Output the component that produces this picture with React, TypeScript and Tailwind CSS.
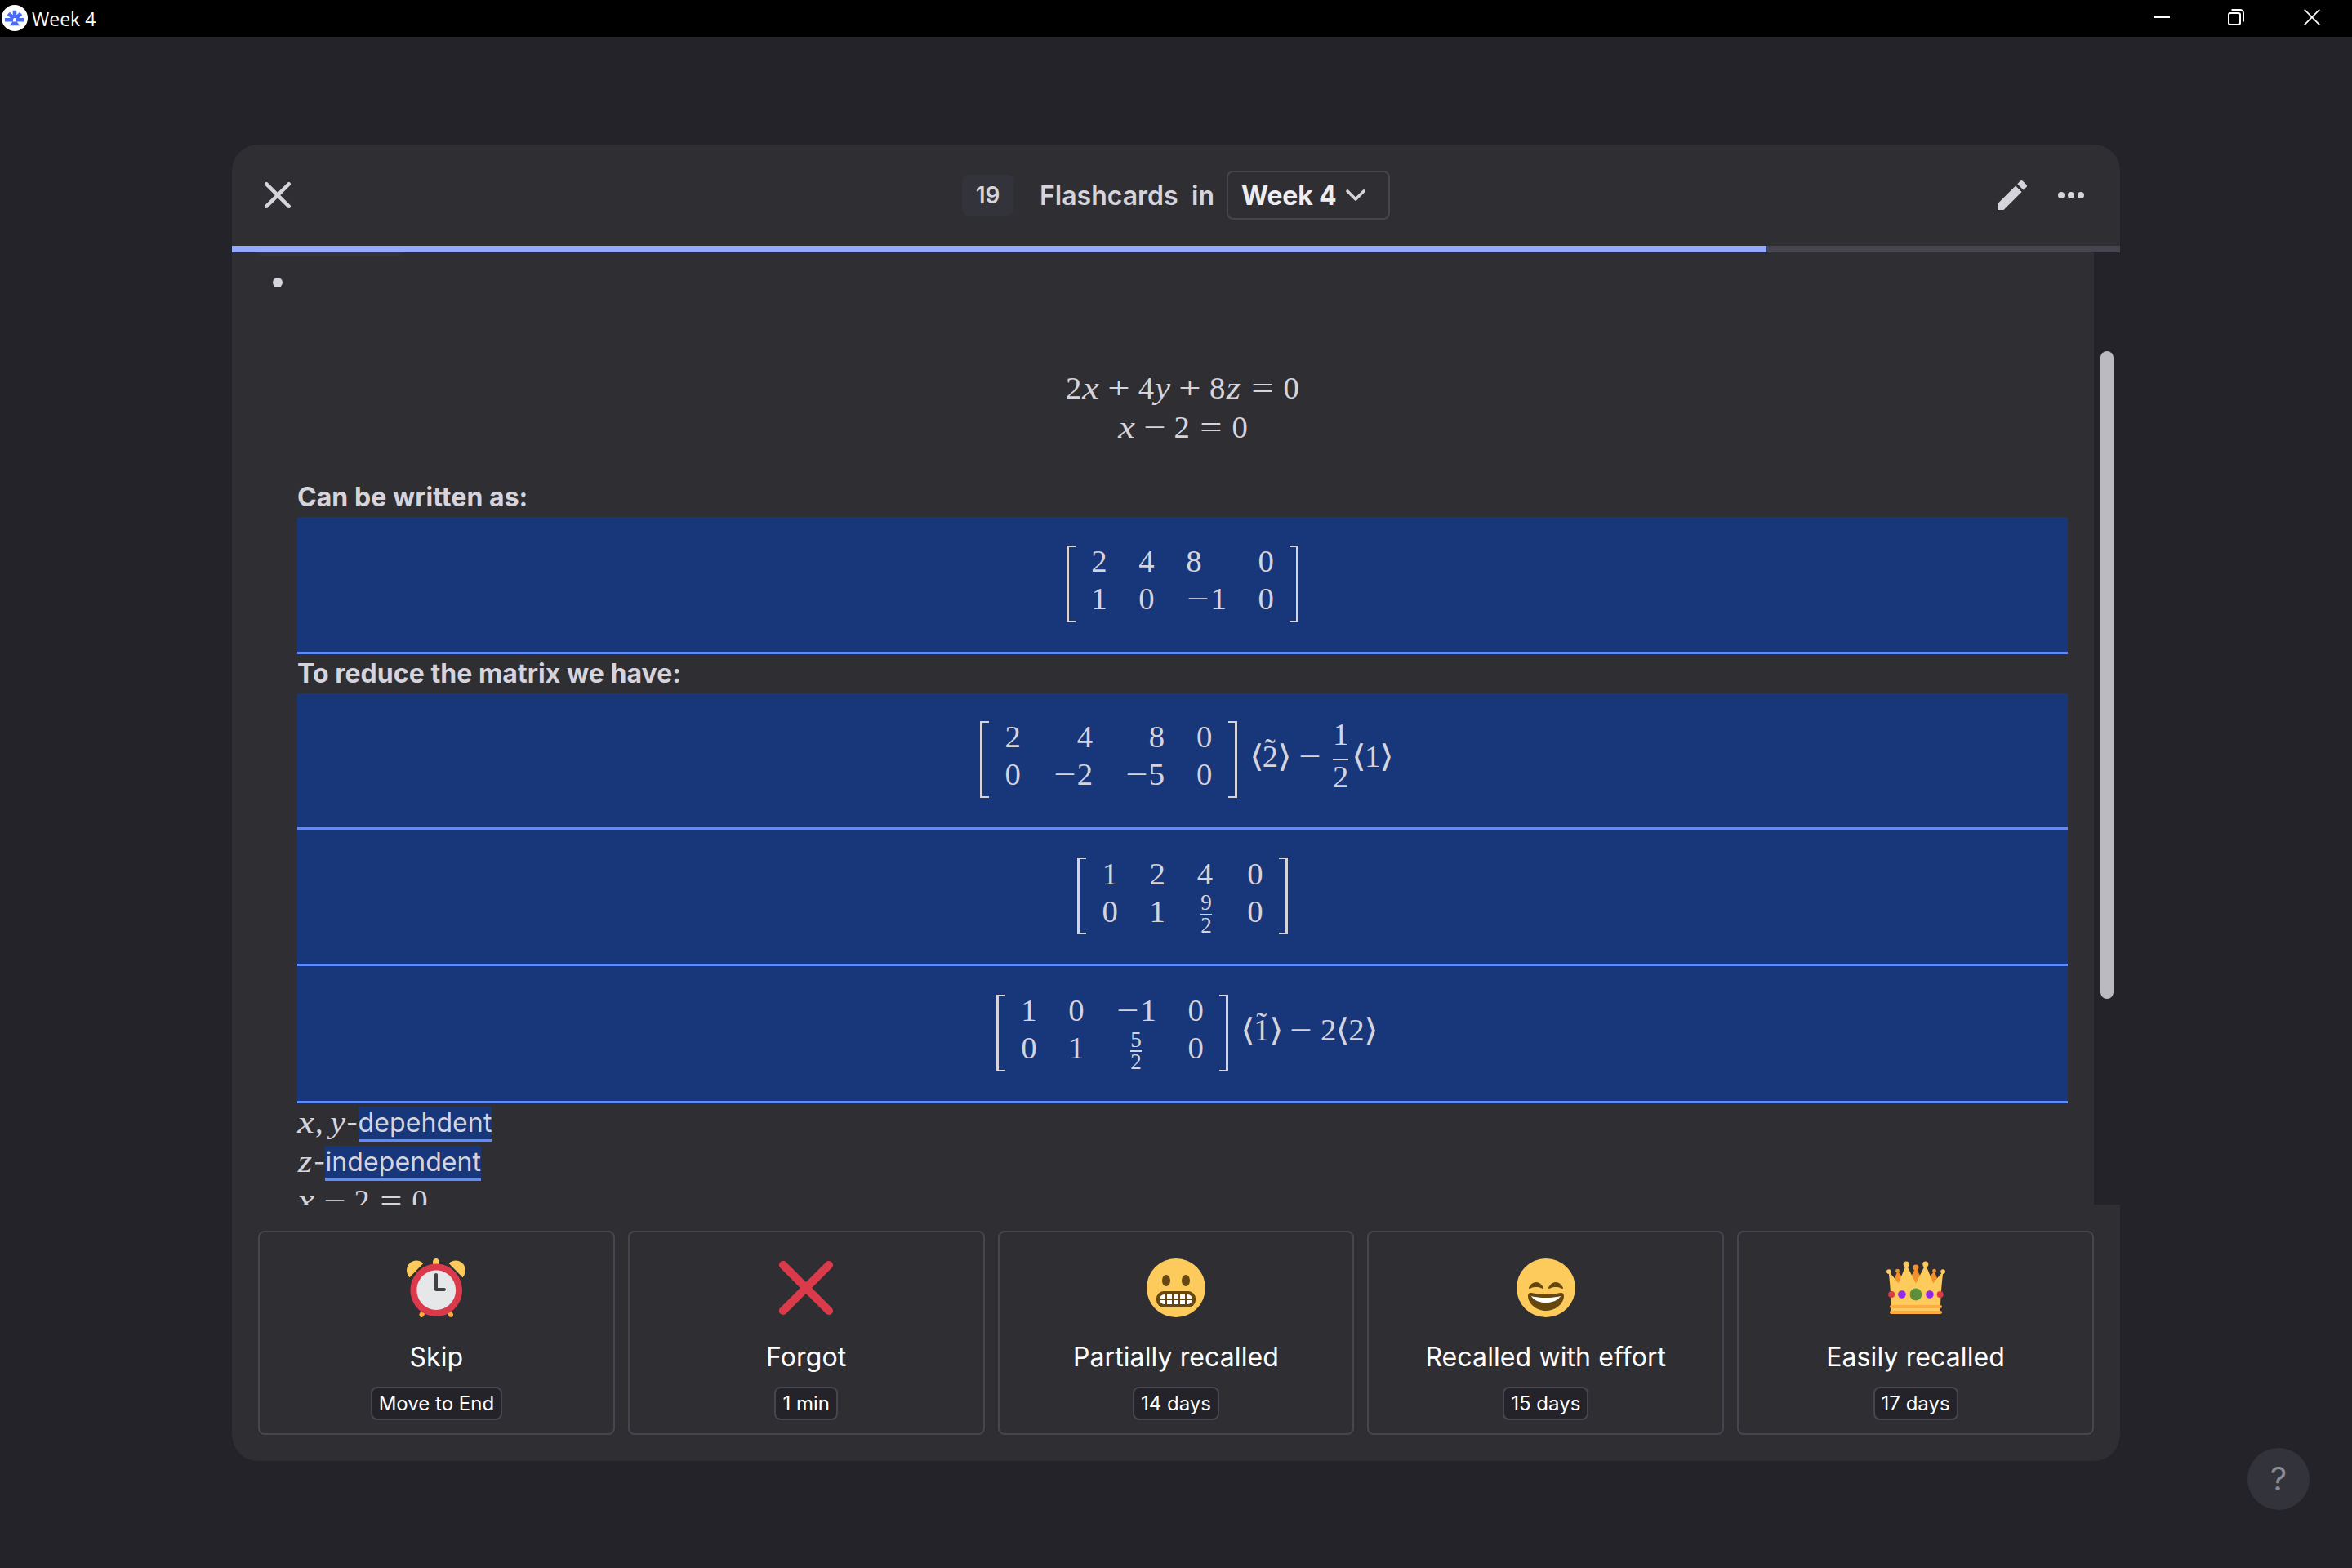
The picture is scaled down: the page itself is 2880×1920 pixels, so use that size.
import React from "react";

const INTER = "font-['Inter',sans-serif]";

/* ---------- math typesetting ---------- */

const cell = "block h-[46.46px] leading-[46.46px] whitespace-nowrap text-center shrink-0";

function D({ children }: { children: React.ReactNode }) {
  return <span className={`${cell} w-[19.36px]`}>{children}</span>;
}

function Op({ children }: { children: React.ReactNode }) {
  return (
    <span className={`${cell} w-[30.12px]`}>
      <span className="inline-block origin-center scale-x-[1.25]">{children}</span>
    </span>
  );
}

function Bin({ children }: { children: React.ReactNode }) {
  return (
    <span className="block px-[8.6px] shrink-0">
      <Op>{children}</Op>
    </span>
  );
}

function Rel() {
  return (
    <span className="block px-[10.76px] shrink-0">
      <Op>=</Op>
    </span>
  );
}

function VarX() {
  return (
    <span className={`${cell} w-[22.1px] italic`}>
      <span className="inline-block origin-center scale-x-[1.2]">x</span>
    </span>
  );
}
function VarY() {
  return (
    <span className={`${cell} w-[20.4px] italic`}>
      <span className="inline-block origin-center scale-x-[1.1]">y</span>
    </span>
  );
}
function VarZ() {
  return (
    <span className={`${cell} w-[19.7px] italic`}>
      <span className="inline-block origin-center scale-x-[1.15]">z</span>
    </span>
  );
}

function Neg({ n }: { n: string }) {
  return (
    <span className="flex">
      <Op>−</Op>
      <D>{n}</D>
    </span>
  );
}

function SmallFrac({ a, b }: { a: string; b: string }) {
  return (
    <span className="flex flex-col items-center w-[22.8px] h-[46.46px] pt-[2.5px] text-[27.1px] leading-[20px]">
      <span className="block h-5 shrink-0">{a}</span>
      <span className="block h-[1.5px] w-[13.5px] mt-[3.5px] bg-[#d5d4dc] shrink-0" />
      <span className="block h-5 mt-[2.5px] shrink-0">{b}</span>
    </span>
  );
}

function Bracket({ side }: { side: "l" | "r" }) {
  return (
    <span
      className={
        side === "l"
          ? "block shrink-0 w-[11px] h-[94px] mt-[3.5px] ml-[9.5px] border-[#d5d4dc] border-l-[3px] border-y-[2.5px]"
          : "block shrink-0 w-[11px] h-[94px] mt-[3.5px] mr-[9.5px] border-[#d5d4dc] border-r-[3px] border-y-[2.5px]"
      }
    />
  );
}

function Matrix({ cols, align }: { cols: [React.ReactNode, React.ReactNode][]; align: string }) {
  return (
    <span className="flex items-start">
      <Bracket side="l" />
      <span className="flex gap-[38.72px] px-[19.36px]">
        {cols.map((c, i) => (
          <span key={i} className={`flex flex-col ${align}`}>
            <span className="flex h-[46.46px]">{c[0]}</span>
            <span className="flex h-[46.46px]">{c[1]}</span>
          </span>
        ))}
      </span>
      <Bracket side="r" />
    </span>
  );
}

function Angle({ children, tilde }: { children: string; tilde?: boolean }) {
  return (
    <span className="flex">
      <span className={`${cell} w-[15px] font-['DejaVu_Sans'] font-extralight text-[38px]`}>
        <span className="inline-block origin-center scale-x-[1.2]">⟨</span>
      </span>
      <span className={`${cell} w-[19.36px] relative`}>
        {children}
        {tilde && <span className="absolute left-[3px] -top-[8px]">˜</span>}
      </span>
      <span className={`${cell} w-[15px] font-['DejaVu_Sans'] font-extralight text-[38px]`}>
        <span className="inline-block origin-center scale-x-[1.2]">⟩</span>
      </span>
    </span>
  );
}

function BlueBlock({ className, children }: { className: string; children: React.ReactNode }) {
  return (
    <div
      className={`flex justify-center items-start overflow-hidden bg-[#18367a] border-b-[3px] border-[#5f8bfa] font-['Liberation_Serif',serif] text-[38.72px] ${className}`}
    >
      {children}
    </div>
  );
}

const d = (s: string) => <D>{s}</D>;

/* ---------- emoji ---------- */

const RED = "#db3a4a";
const YEL = "#fdcb5b";

function Emoji({ children }: { children: React.ReactNode }) {
  return (
    <svg viewBox="0 0 36 36" className="size-[72px] shrink-0">
      {children}
    </svg>
  );
}

function Clock() {
  return (
    <Emoji>
      <path fill={YEL} d="M20 6.042c0 1.112-.903 2.014-2 2.014s-2-.902-2-2.014V2.014C16 .901 16.903 0 18 0s2 .901 2 2.014v4.028z" />
      <path fill="#fdac43" d="M9.18 36c-.224 0-.452-.052-.666-.159-.736-.374-1.035-1.28-.667-2.027l8.94-18.127c.252-.512.768-.835 1.333-.835s1.081.323 1.333.835l8.941 18.127c.368.747.07 1.653-.666 2.027-.736.372-1.631.07-1.999-.676L18.121 19.74l-7.607 15.425c-.262.529-.788.835-1.334.835z" />
      <path fill={RED} d="M34.015 19.385c0 8.898-7.115 16.111-15.894 16.111-8.777 0-15.893-7.213-15.893-16.111 0-8.9 7.116-16.113 15.893-16.113 8.778-.001 15.894 7.213 15.894 16.113z" />
      <path fill="#e6e7e8" d="M30.041 19.385c0 6.674-5.335 12.084-11.92 12.084-6.583 0-11.919-5.41-11.919-12.084C6.202 12.71 11.538 7.3 18.121 7.3c6.585-.001 11.92 5.41 11.92 12.085z" />
      <path fill={YEL} d="M30.04 1.257c-1.646 0-3.135.676-4.214 1.77l8.429 8.544C35.333 10.478 36 8.968 36 7.299c0-3.336-2.669-6.042-5.96-6.042zm-24.08 0c1.645 0 3.135.676 4.214 1.77l-8.429 8.544C.667 10.478 0 8.968 0 7.299c0-3.336 2.668-6.042 5.96-6.042z" />
      <path fill="#414042" d="M23 20h-5c-.552 0-1-.447-1-1v-9c0-.552.448-1 1-1s1 .448 1 1v8h4c.553 0 1 .448 1 1 0 .553-.447 1-1 1z" />
    </Emoji>
  );
}

function Cross() {
  return (
    <Emoji>
      <path fill={RED} d="M21.533 18.002L33.768 5.768c.976-.976.976-2.559 0-3.535-.977-.977-2.559-.977-3.535 0L17.998 14.467 5.764 2.233c-.976-.977-2.56-.977-3.535 0-.977.976-.977 2.559 0 3.535l12.234 12.234L2.201 30.265c-.977.977-.977 2.559 0 3.535.488.488 1.128.732 1.768.732s1.28-.244 1.768-.732l12.262-12.262 12.234 12.234c.488.488 1.128.732 1.768.732.64 0 1.279-.244 1.768-.732.976-.977.976-2.559 0-3.535L21.533 18.002z" />
    </Emoji>
  );
}

function Grimace() {
  return (
    <Emoji>
      <circle cx="18" cy="18" r="18" fill={YEL} />
      <ellipse cx="12" cy="13.5" rx="2.5" ry="3.5" fill="#65470f" />
      <ellipse cx="24" cy="13.5" rx="2.5" ry="3.5" fill="#65470f" />
      <rect x="6" y="20" width="24" height="10" rx="4.5" fill="#65470f" />
      <rect x="8" y="22" width="20" height="6" rx="2.8" fill="#fff" />
      <path d="M8 25h20M12 22v6M16 22v6M20 22v6M24 22v6" stroke="#65470f" strokeWidth="1" fill="none" />
    </Emoji>
  );
}

function Laugh() {
  return (
    <Emoji>
      <circle cx="18" cy="18" r="18" fill={YEL} />
      <path
        fill="#65470f"
        d="M28.457 17.797c-.06-.135-1.499-3.297-4.457-3.297-2.957 0-4.397 3.162-4.457 3.297-.092.207-.032.449.145.591.175.142.426.147.61.014.012-.009 1.262-.902 3.702-.902 2.426 0 3.674.881 3.702.901.088.066.194.099.298.099.11 0 .221-.037.312-.109.177-.142.238-.386.145-.594zm-12 0c-.06-.135-1.499-3.297-4.457-3.297-2.957 0-4.397 3.162-4.457 3.297-.092.207-.032.449.144.591.176.142.427.147.61.014.013-.009 1.262-.902 3.703-.902 2.426 0 3.674.881 3.702.901.089.066.194.099.298.099.11 0 .221-.037.312-.109.178-.142.237-.386.145-.594zM18 22c-3.623 0-6.027-.422-9-1-.679-.131-2 0-2 2 0 4 4.595 9 11 9 6.404 0 11-5 11-9 0-2-1.321-2.132-2-2-2.973.578-5.377 1-9 1z"
      />
      <path fill="#fff" d="M9 23s3 1 9 1 9-1 9-1-2 4-9 4-9-4-9-4z" />
    </Emoji>
  );
}

function Crown() {
  return (
    <Emoji>
      <g fill="#f0912b">
        <path d="M14.174 17.075L6.75 7.594l-3.722 9.481z" />
        <path d="M17.938 5.534l-6.563 12.389H24.5z" />
        <path d="M21.826 17.075l7.424-9.481 3.722 9.481z" />
      </g>
      <path fill={YEL} d="M28.669 15.19L23.887 3.523l-5.88 11.668-.007.003-.007-.004-5.88-11.668L7.331 15.19C4.197 10.833 1.28 8.042 1.28 8.042S3 20.75 3 33h30c0-12.25 1.72-24.958 1.72-24.958s-2.917 2.791-6.051 7.148z" />
      <circle fill="#5c913b" cx="17.957" cy="22" r="3.688" />
      <circle fill="#9328e6" cx="26.463" cy="22" r="2.412" />
      <circle fill={RED} cx="32.852" cy="22" r="1.986" />
      <circle fill="#9328e6" cx="9.45" cy="22" r="2.412" />
      <circle fill={RED} cx="3.061" cy="22" r="1.986" />
      <path fill="#fdac43" d="M33 34H3c-.552 0-1-.447-1-1s.448-1 1-1h30c.553 0 1 .447 1 1s-.447 1-1 1zm0-3.486H3c-.552 0-1-.447-1-1s.448-1 1-1h30c.553 0 1 .447 1 1s-.447 1-1 1z" />
      <circle fill={YEL} cx="1.447" cy="8.042" r="1.407" />
      <circle fill="#f0912b" cx="6.75" cy="7.594" r="1.192" />
      <circle fill={YEL} cx="12.113" cy="3.523" r="1.784" />
      <circle fill={YEL} cx="34.553" cy="8.042" r="1.407" />
      <circle fill="#f0912b" cx="29.25" cy="7.594" r="1.192" />
      <circle fill={YEL} cx="23.887" cy="3.523" r="1.784" />
      <circle fill="#f0912b" cx="17.938" cy="5.534" r="1.784" />
    </Emoji>
  );
}

const answers = [
  { icon: <Clock />, label: "Skip", time: "Move to End" },
  { icon: <Cross />, label: "Forgot", time: "1 min" },
  { icon: <Grimace />, label: "Partially recalled", time: "14 days" },
  { icon: <Laugh />, label: "Recalled with effort", time: "15 days" },
  { icon: <Crown />, label: "Easily recalled", time: "17 days" },
];

function TitleBar() {
  return (
    <header className="flex items-start justify-between h-[45px] bg-black text-white shrink-0">
      <div className="flex items-start">
        <svg viewBox="0 0 32 32" className="size-8 ml-[2px] mt-[6px]">
          <circle cx="16" cy="16" r="16" fill="#fff" />
          <g stroke="#4b6bfb" strokeWidth="4.6" fill="none">
            <path d="M16 6.700v9.300M4 18.300h10M18 18.300h10M8.300 10.500l6.500 6M23.700 10.500l-6.500 6" />
          </g>
          <path d="M9.700 25.300l4-5.300h4.600l4 5.300z" fill="#4b6bfb" />
          <path d="M16 16.800l2 3.700h-4z" fill="#fff" />
        </svg>
        <span className="ml-[5px] mt-[6px] leading-[34px] text-[23px] font-['Open_Sans',sans-serif]">Week 4</span>
      </div>
      <svg viewBox="0 0 204 20" className="w-[204px] h-5 mt-[11px] mr-[39px]" fill="none" stroke="#fff" strokeWidth="2">
        <path d="M0 10h20" />
        <rect x="92" y="5" width="14" height="14" rx="2" />
        <path d="M95.500 1H106a4 4 0 0 1 4 4v10.500" />
        <path d="M184.700.7l18.600 18.600M203.300.7l-18.600 18.600" strokeWidth="1.700" />
      </svg>
    </header>
  );
}

export default function App() {
  return (
    <div className={`relative flex flex-col w-[2880px] h-[1920px] overflow-hidden bg-[#242329] text-[#d5d4dc] ${INTER}`}>
      <TitleBar />

      <main className="flex flex-col w-[2312px] h-[1612px] mt-[132px] ml-[284px] shrink-0">
        <div className="grid grid-cols-[1fr_auto_1fr] items-center h-[124px] px-10 rounded-t-[32px] bg-[#2f2e33] shrink-0">
          <svg viewBox="0 0 32 32" className="size-8" fill="none" stroke="#d5d4dc" strokeWidth="4.600" strokeLinecap="round">
            <path d="M2.300 2.300l27.400 27.400M29.700 2.300L2.300 29.700" />
          </svg>
          <div className="flex items-center text-[32px] font-semibold">
            <span className="flex items-center justify-center w-[63px] h-[50px] rounded-lg bg-[#33343b] text-[28px]">19</span>
            <span className="ml-8 w-[170px] pt-[2px] whitespace-nowrap">Flashcards</span>
            <span className="ml-4 w-[27px] pt-[2px]">in</span>
            <span className="flex items-center w-[200px] h-[60px] ml-4 pl-4 rounded-lg border-2 border-[#474650] text-[#ededf2] font-bold whitespace-nowrap">
              <span className="w-[118px] pt-px tracking-[-0.2px]">Week 4</span>
              <svg viewBox="0 0 24 14" className="w-6 h-[14px] ml-[10px]" fill="none" stroke="#d5d4dc" strokeWidth="3.600" strokeLinecap="round" strokeLinejoin="round">
                <path d="M2 2l10 10L22 2" />
              </svg>
            </span>
          </div>
          <div className="flex items-center justify-end gap-8">
            <svg viewBox="0 0 24 24" className="size-12" fill="#d5d4dc">
              <path d="M3 17.250V21h3.750L17.810 9.940l-3.750-3.750L3 17.250zM20.710 7.040c.39-.39.39-1.020 0-1.410l-2.340-2.340c-.39-.39-1.020-.39-1.410 0l-1.830 1.830 3.750 3.750 1.830-1.830z" />
            </svg>
            <svg viewBox="0 0 32 8" className="w-8 h-2 mr-1" fill="#d5d4dc">
              <circle cx="4" cy="4" r="4" />
              <circle cx="16" cy="4" r="4" />
              <circle cx="28" cy="4" r="4" />
            </svg>
          </div>
        </div>

        <div className="h-2 bg-[#474650] shrink-0">
          <div className="h-2 w-[1879px] bg-[#96a9fb]" />
        </div>

        <div className="flex h-[1166px] shrink-0">
          <div className="w-[2280px] h-full px-8 bg-[#2f2e33] overflow-hidden">
            <div className="h-[5px] w-[176px] rounded-b-[8px] bg-[#33343b]" />
            <div className="flex h-[271px]">
              <span className="size-3 mt-[26px] ml-[18px] rounded-full bg-[#d5d4dc] shrink-0" />
              <div className="flex flex-col items-center w-[2168px] ml-[18px] pt-[137.500px] font-['Liberation_Serif',serif] text-[38.72px]">
                <div className="flex h-[48.500px] shrink-0">
                  <D>2</D><VarX /><Bin>+</Bin><D>4</D><VarY /><Bin>+</Bin><D>8</D><VarZ /><Rel /><D>0</D>
                </div>
                <div className="flex shrink-0">
                  <VarX /><Bin>−</Bin><D>2</D><Rel /><D>0</D>
                </div>
              </div>
            </div>

            <div className="w-[2168px] ml-12 text-[32px]">
              <p className="h-12 leading-[48px] font-bold tracking-[0.05px]">Can be written as:</p>
              <BlueBlock className="h-[168px] pt-[31px]">
                <Matrix
                  align="items-start"
                  cols={[[d("2"), d("1")], [d("4"), d("0")], [d("8"), <Neg n="1" />], [d("0"), d("0")]]}
                />
              </BlueBlock>
              <p className="h-12 leading-[48px] font-bold tracking-[0.05px]">To reduce the matrix we have:</p>
              <BlueBlock className="h-[167px] pt-[30px]">
                <Matrix
                  align="items-end"
                  cols={[[d("2"), d("0")], [d("4"), <Neg n="2" />], [d("8"), <Neg n="5" />], [d("0"), d("0")]]}
                />
                <span className="flex ml-[6.500px] mt-[24px]">
                  <Angle tilde>2</Angle>
                  <Bin>−</Bin>
                </span>
                <span className="flex flex-col items-center w-[28.700px] mt-[2px] leading-[36px] shrink-0">
                  <span className="block h-9">1</span>
                  <span className="block w-[19.400px] h-[1.500px] mt-[12px] bg-[#d5d4dc]" />
                  <span className="block h-9 mt-[2px]">2</span>
                </span>
                <span className="flex mt-[24px]">
                  <Angle>1</Angle>
                </span>
              </BlueBlock>
              <BlueBlock className="h-[167px] pt-[30.500px]">
                <Matrix
                  align="items-start"
                  cols={[[d("1"), d("0")], [d("2"), d("1")], [d("4"), <SmallFrac a="9" b="2" />], [d("0"), d("0")]]}
                />
              </BlueBlock>
              <BlueBlock className="h-[168px] pt-[31px]">
                <Matrix
                  align="items-center"
                  cols={[[d("1"), d("0")], [d("0"), d("1")], [<Neg n="1" />, <SmallFrac a="5" b="2" />], [d("0"), d("0")]]}
                />
                <span className="flex ml-[6.500px] mt-[24px]">
                  <Angle tilde>1</Angle>
                  <Bin>−</Bin>
                  <D>2</D>
                  <Angle>2</Angle>
                </span>
              </BlueBlock>

              <div className="flex h-12 leading-[48px]">
                <span className="flex font-['Liberation_Serif',serif] text-[38.72px]">
                  <VarX />
                  <span className={`${cell} w-[17.300px] !text-left`}>,</span>
                  <VarY />
                </span>
                <span>-</span>
                <span className="h-[43px] mt-1 leading-[40px] tracking-[0.1px] bg-[#18367a] border-b-[3px] border-[#5f8bfa]">depehdent</span>
              </div>
              <div className="flex h-12 leading-[48px]">
                <span className="flex font-['Liberation_Serif',serif] text-[38.72px]">
                  <VarZ />
                </span>
                <span>-</span>
                <span className="h-[43px] mt-1 leading-[40px] tracking-[0.1px] bg-[#18367a] border-b-[3px] border-[#5f8bfa]">independent</span>
              </div>
              <div className="flex h-12 font-['Liberation_Serif',serif] text-[38.72px]">
                <VarX /><Bin>−</Bin><D>2</D><Rel /><D>0</D>
              </div>
            </div>
          </div>
          <div className="w-8 pt-[121px] pl-2">
            <div className="w-4 h-[793px] rounded-full bg-[#bbbac1]" />
          </div>
        </div>

        <div className="grid grid-cols-5 gap-4 h-[314px] p-8 rounded-b-[32px] bg-[#2f2e33] text-white shrink-0">
          {answers.map((a) => (
            <div key={a.label} className="flex flex-col items-center pt-8 rounded-lg border-2 border-[#474650]">
              {a.icon}
              <span className="mt-[25px] h-12 leading-[48px] text-[32px] tracking-[0.1px]">{a.label}</span>
              <span className="mt-3 h-[41px] leading-[37px] px-2 rounded-lg border-2 border-[#474650] bg-[#242329] text-2xl">
                {a.time}
              </span>
            </div>
          ))}
        </div>
      </main>

      <div className="absolute left-[2752px] top-[1773px] flex items-center justify-center size-[76px] rounded-full bg-[#33343b] text-[#8b8b98] text-[40px]">
        ?
      </div>
    </div>
  );
}
